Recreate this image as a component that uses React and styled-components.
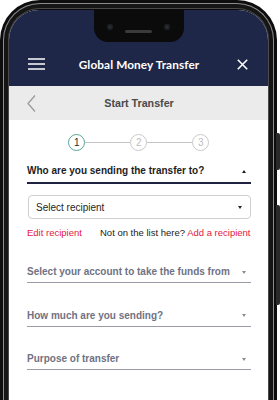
import React from "react";
import styled, { createGlobalStyle } from "styled-components";

const Global = createGlobalStyle`
  html, body { margin: 0; padding: 0; background: #ffffff; }
  body { width: 280px; height: 400px; overflow: hidden; font-family: "Liberation Sans", Arial, sans-serif; }
  * { box-sizing: border-box; }
`;

const Stage = styled.div`
  position: relative;
  width: 280px;
  height: 400px;
  overflow: hidden;
`;

const Phone = styled.div`
  position: relative;
  width: 277px;
  height: 420px;
  background: #0d0d0d;
  border-radius: 40px 40px 0 0;
  padding: 3px 3px 0 3px;
`;

const Rim = styled.div`
  height: 100%;
  border: 1.5px solid #8c8c8c;
  border-bottom: none;
  border-radius: 37px 37px 0 0;
  background: #151515;
  padding: 4px 4px 0 4px;
`;

const Bezel = styled.div`
  height: 100%;
  border: 1px solid #4a4a4a;
  border-bottom: none;
  border-radius: 32px 32px 0 0;
  background: #0a0a0a;
  padding: 1px 0 0 0;
`;

const Screen = styled.div`
  position: relative;
  height: 100%;
  background: #ffffff;
  border-radius: 30px 30px 0 0;
  overflow: hidden;
`;

const SideButton = styled.div`
  position: absolute;
  right: -3px;
  top: ${(p) => p.$top}px;
  width: 4px;
  height: ${(p) => p.$h}px;
  background: #2a2a2a;
  border-radius: 0 2px 2px 0;
`;

const Notch = styled.div`
  position: absolute;
  left: 50%;
  top: 0;
  transform: translateX(-50%);
  width: 90px;
  height: 32px;
  background: #0b0b0b;
  border-radius: 0 0 14px 14px;
  display: flex;
  align-items: center;
  justify-content: center;
  gap: 12px;
  padding-top: 2px;
`;

const Camera = styled.div`
  width: 6px;
  height: 6px;
  border-radius: 50%;
  background: #2c2f36;
  box-shadow: inset 0 0 0 1.5px #1a1c20;
`;

const Speaker = styled.div`
  width: 27px;
  height: 3px;
  border-radius: 2px;
  background: #3a3a3a;
  margin-top: 8px;
`;

const Header = styled.header`
  background: #1f2749;
  height: 76px;
  padding: 40px 17px 0 18px;
  display: flex;
  align-items: flex-start;
`;

const HeaderRow = styled.div`
  flex: 1;
  height: 28px;
  display: flex;
  align-items: center;
  justify-content: space-between;
`;

const Title = styled.h1`
  margin: 0;
  color: #ffffff;
  font-family: Lato, "Open Sans", sans-serif;
  font-weight: 700;
  font-size: 11.8px;
  letter-spacing: 0.1px;
`;

const IconBtn = styled.span`
  width: 18px;
  height: 18px;
  display: flex;
  align-items: center;
  justify-content: center;
`;

const SubHeader = styled.div`
  background: #ebebeb;
  height: 34px;
  padding: 0 17px 0 18px;
  display: grid;
  grid-template-columns: 20px 1fr 20px;
  align-items: center;
`;

const SubTitle = styled.div`
  text-align: center;
  color: #4a4a4a;
  font-weight: 700;
  font-size: 10.7px;
`;

const Content = styled.main`
  padding: 14px 17.5px 0 18px;
  display: flex;
  flex-direction: column;
`;

const Stepper = styled.div`
  display: flex;
  align-items: center;
  justify-content: center;
  height: 17px;
`;

const Step = styled.div`
  width: 17px;
  height: 17px;
  border-radius: 50%;
  border: 1.5px solid ${(p) => (p.$active ? "#5aa596" : "#c9c9c9")};
  color: ${(p) => (p.$active ? "#2b2b2b" : "#bdbdbd")};
  font-size: 10px;
  display: flex;
  align-items: center;
  justify-content: center;
  background: #fff;
`;

const StepLine = styled.div`
  width: 45px;
  height: 1.5px;
  background: #c4c4c4;
`;

const SectionHead = styled.div`
  margin-top: 12px;
  display: flex;
  align-items: center;
  justify-content: space-between;
  padding: 0 5px 3px 0;
  border-bottom: 2px solid #1f2240;
  color: #1d1d24;
  font-weight: 700;
  font-size: 10px;
  line-height: 16px;
  white-space: nowrap;
`;

const Caret = styled.span`
  width: 0;
  height: 0;
  border-left: 2.5px solid transparent;
  border-right: 2.5px solid transparent;
  ${(p) => (p.$up ? `border-bottom: 3px solid ${p.$c};` : `border-top: 3px solid ${p.$c};`)}
`;

const SelectBox = styled.div`
  margin-top: 11px;
  margin-left: 1px;
  height: 24px;
  border: 1px solid #cfcfcf;
  border-radius: 4px;
  padding: 0 8px 0 7px;
  display: flex;
  align-items: center;
  justify-content: space-between;
  font-size: 10px;
  color: #262626;
`;

const LinkRow = styled.div`
  margin-top: 8px;
  display: flex;
  justify-content: space-between;
  font-size: 9.5px;
  line-height: 12px;
  color: #222;
  white-space: nowrap;
`;

const RedLink = styled.span`
  color: #e3173c;
`;

const Field = styled.div`
  margin-top: ${(p) => p.$mt}px;
  display: flex;
  align-items: center;
  justify-content: space-between;
  padding: 0 5px 2px 0;
  border-bottom: 1.5px solid #9a9ba6;
  color: #707282;
  font-weight: 700;
  font-size: 10px;
  line-height: 16px;
  white-space: nowrap;
`;

const Menu = () => (
  <svg width="17" height="12" viewBox="0 0 17 12">
    <path d="M0 1h17M0 6h17M0 11h17" stroke="#fff" strokeWidth="1.6" />
  </svg>
);

const Close = () => (
  <svg width="11" height="11" viewBox="0 0 11 11">
    <path d="M0.8 0.8L10.2 10.2M10.2 0.8L0.8 10.2" stroke="#fff" strokeWidth="1.6" />
  </svg>
);

const Back = () => (
  <svg width="9" height="17" viewBox="0 0 9 17">
    <path d="M8 0.5L1 8.5L8 16.5" stroke="#9a9a9a" strokeWidth="1.3" fill="none" />
  </svg>
);

export default function App() {
  return (
    <Stage>
      <Global />
      <Phone>
        <SideButton $top={133} $h={37} />
        <SideButton $top={205} $h={100} />
        <Rim>
          <Bezel>
            <Screen>
              <Header>
                <HeaderRow>
                  <IconBtn><Menu /></IconBtn>
                  <Title>Global Money Transfer</Title>
                  <IconBtn><Close /></IconBtn>
                </HeaderRow>
              </Header>
              <SubHeader>
                <Back />
                <SubTitle>Start Transfer</SubTitle>
                <span />
              </SubHeader>
              <Content>
                <Stepper>
                  <Step $active>1</Step>
                  <StepLine />
                  <Step>2</Step>
                  <StepLine />
                  <Step>3</Step>
                </Stepper>
                <SectionHead>
                  Who are you sending the transfer to?
                  <Caret $up $c="#1d1d24" />
                </SectionHead>
                <SelectBox>
                  Select recipient
                  <Caret $c="#262626" />
                </SelectBox>
                <LinkRow>
                  <RedLink>Edit recipient</RedLink>
                  <span>
                    Not on the list here? <RedLink>Add a recipient</RedLink>
                  </span>
                </LinkRow>
                <Field $mt={25}>
                  Select your account to take the funds from
                  <Caret $c="#8a8b96" />
                </Field>
                <Field $mt={24.5}>
                  How much are you sending?
                  <Caret $c="#8a8b96" />
                </Field>
                <Field $mt={24.5}>
                  Purpose of transfer
                  <Caret $c="#8a8b96" />
                </Field>
              </Content>
              <Notch>
                <Camera />
                <Speaker />
                <Camera />
              </Notch>
            </Screen>
          </Bezel>
        </Rim>
      </Phone>
    </Stage>
  );
}
